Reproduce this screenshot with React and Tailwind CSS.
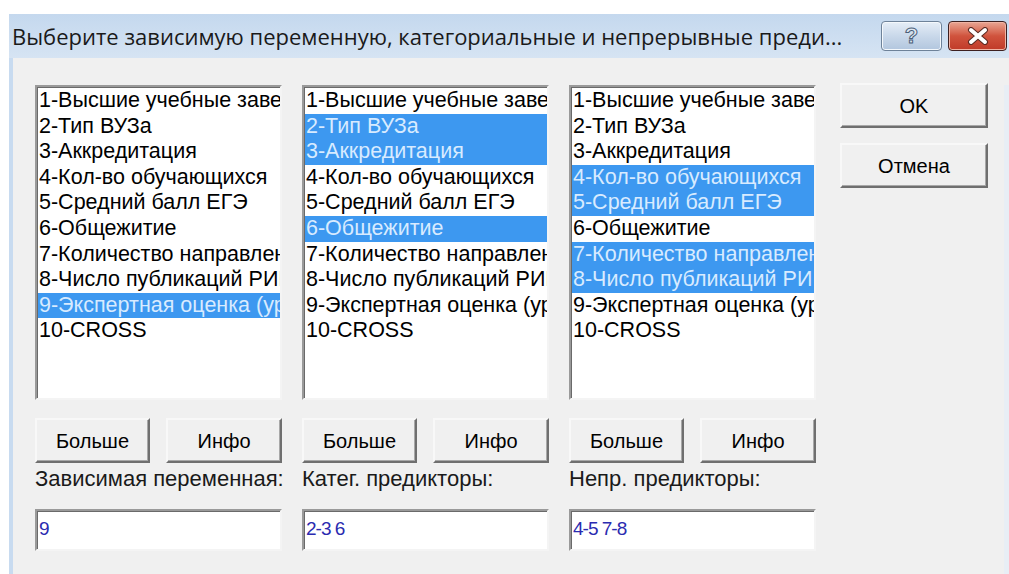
import React from 'react';

const ITEMS = [
  '1-Высшие учебные заведения',
  '2-Тип ВУЗа',
  '3-Аккредитация',
  '4-Кол-во обучающихся',
  '5-Средний балл ЕГЭ',
  '6-Общежитие',
  '7-Количество направлений',
  '8-Число публикаций РИНЦ',
  '9-Экспертная оценка (уровень)',
  '10-CROSS',
];

const COLUMNS = [
  { label: 'Зависимая переменная:', value: '9', selected: [9] },
  { label: 'Катег. предикторы:', value: '2-3 6', selected: [2, 3, 6] },
  { label: 'Непр. предикторы:', value: '4-5 7-8', selected: [4, 5, 7, 8] },
];

const FONT = { fontFamily: '"Liberation Sans", Arial, sans-serif' };

function Button({ children, className = '' }) {
  return (
    <button
      className={
        'flex items-center justify-center bg-[#f0f0f0] text-[20px] text-black ' +
        'border-2 border-t-[#f8f8f8] border-l-[#f8f8f8] border-r-[#6f6f6f] border-b-[#6f6f6f] ' +
        'shadow-[inset_-1px_-1px_0_#a8a8a8] ' +
        className
      }
    >
      {children}
    </button>
  );
}

function ListBox({ selected }) {
  return (
    <div className="h-[315px] w-full overflow-hidden bg-white border-2 border-t-[#9a9a9a] border-l-[#9a9a9a] border-r-[#f4f4f4] border-b-[#f4f4f4] shadow-[inset_1px_1px_0_#6a6a6a] pt-[1px] pl-[1px]">
      {ITEMS.map((item, i) => {
        const on = selected.includes(i + 1);
        return (
          <div
            key={item}
            className={
              'h-[25.6px] whitespace-nowrap overflow-hidden pl-[1px] text-[21.5px] leading-[25.6px] ' +
              (on ? 'bg-[#3d98f0] text-[#d8ebff]' : 'text-black')
            }
          >
            {item}
          </div>
        );
      })}
    </div>
  );
}

function Column({ label, value, selected }) {
  return (
    <div className="flex w-[247px] flex-col">
      <ListBox selected={selected} />
      <div className="mt-[18px] flex gap-[16px]">
        <Button className="h-[45px] w-[115px]">Больше</Button>
        <Button className="h-[45px] w-[116px]">Инфо</Button>
      </div>
      <div className="mt-[4px] h-[24px] whitespace-nowrap text-[22px] leading-[24px] text-[#1a1a1a]">
        {label}
      </div>
      <div className="mt-[18px] flex h-[42px] items-center bg-white border-2 border-t-[#9a9a9a] border-l-[#9a9a9a] border-r-[#f4f4f4] border-b-[#f4f4f4] shadow-[inset_1px_1px_0_#6a6a6a] pl-[2px] pb-[2px] text-[19px] tracking-[-1px] text-[#2b2bb0]">
        {value}
      </div>
    </div>
  );
}

function TitleButtons() {
  return (
    <div className="flex items-center gap-[6px] pr-[2px]">
      <div className="flex h-[30px] w-[61px] items-center justify-center rounded-[4px] border border-[#6e8299] bg-gradient-to-b from-[#e6eef7] via-[#c9d8ea] to-[#b2c6de] shadow-[inset_0_0_0_1px_#f4f8fc]">
        <span
          className="text-[22px] font-bold leading-none text-[#dfe8f2]"
          style={{ ...FONT, WebkitTextStroke: '1px #4b5e78' }}
        >
          ?
        </span>
      </div>
      <div className="flex h-[30px] w-[59px] items-center justify-center rounded-[4px] border border-[#3d2020] bg-gradient-to-b from-[#e8a593] via-[#d0533d] to-[#c03a28] shadow-[inset_0_0_0_1px_#f0b4a4]">
        <svg width="24" height="18" viewBox="0 0 24 18">
          <path
            d="M5 3 L19 15 M19 3 L5 15"
            stroke="#5b2a22"
            strokeWidth="6"
            strokeLinecap="round"
          />
          <path
            d="M5 3 L19 15 M19 3 L5 15"
            stroke="#ffffff"
            strokeWidth="4"
            strokeLinecap="round"
          />
        </svg>
      </div>
    </div>
  );
}

export default function App() {
  return (
    <div className="h-[574px] w-[1009px] overflow-hidden bg-white pt-[14px]" style={FONT}>
      <div className="ml-[9px] flex h-[560px] flex-col rounded-tl-[6px] bg-[#c8dbf0]">
        {/* caption */}
        <div className="flex h-[44px] items-center justify-between bg-gradient-to-b from-[#c4d8ee] to-[#d6e4f3] pl-[3px]">
          <span
            className="whitespace-nowrap text-[22px] text-[#1a1a1a]"
            style={{ fontFamily: '"Open Sans", "Noto Sans", sans-serif' }}
          >
            Выберите зависимую переменную, категориальные и непрерывные преди...
          </span>
          <TitleButtons />
        </div>

        {/* client area */}
        <div className="ml-[4px] flex flex-1 bg-[#f0f0f0] pl-[22px] pt-[27px]">
          <div className="flex gap-[20px]">
            {COLUMNS.map((c) => (
              <Column key={c.label} {...c} />
            ))}
          </div>
          <div className="ml-[24px] flex flex-col gap-[15px]">
            <Button className="-mt-[2px] h-[45px] w-[148px]">OK</Button>
            <Button className="h-[45px] w-[148px]">Отмена</Button>
          </div>
          <div className="ml-auto w-[5px] bg-[#e8eef5]" />
        </div>
      </div>
    </div>
  );
}
